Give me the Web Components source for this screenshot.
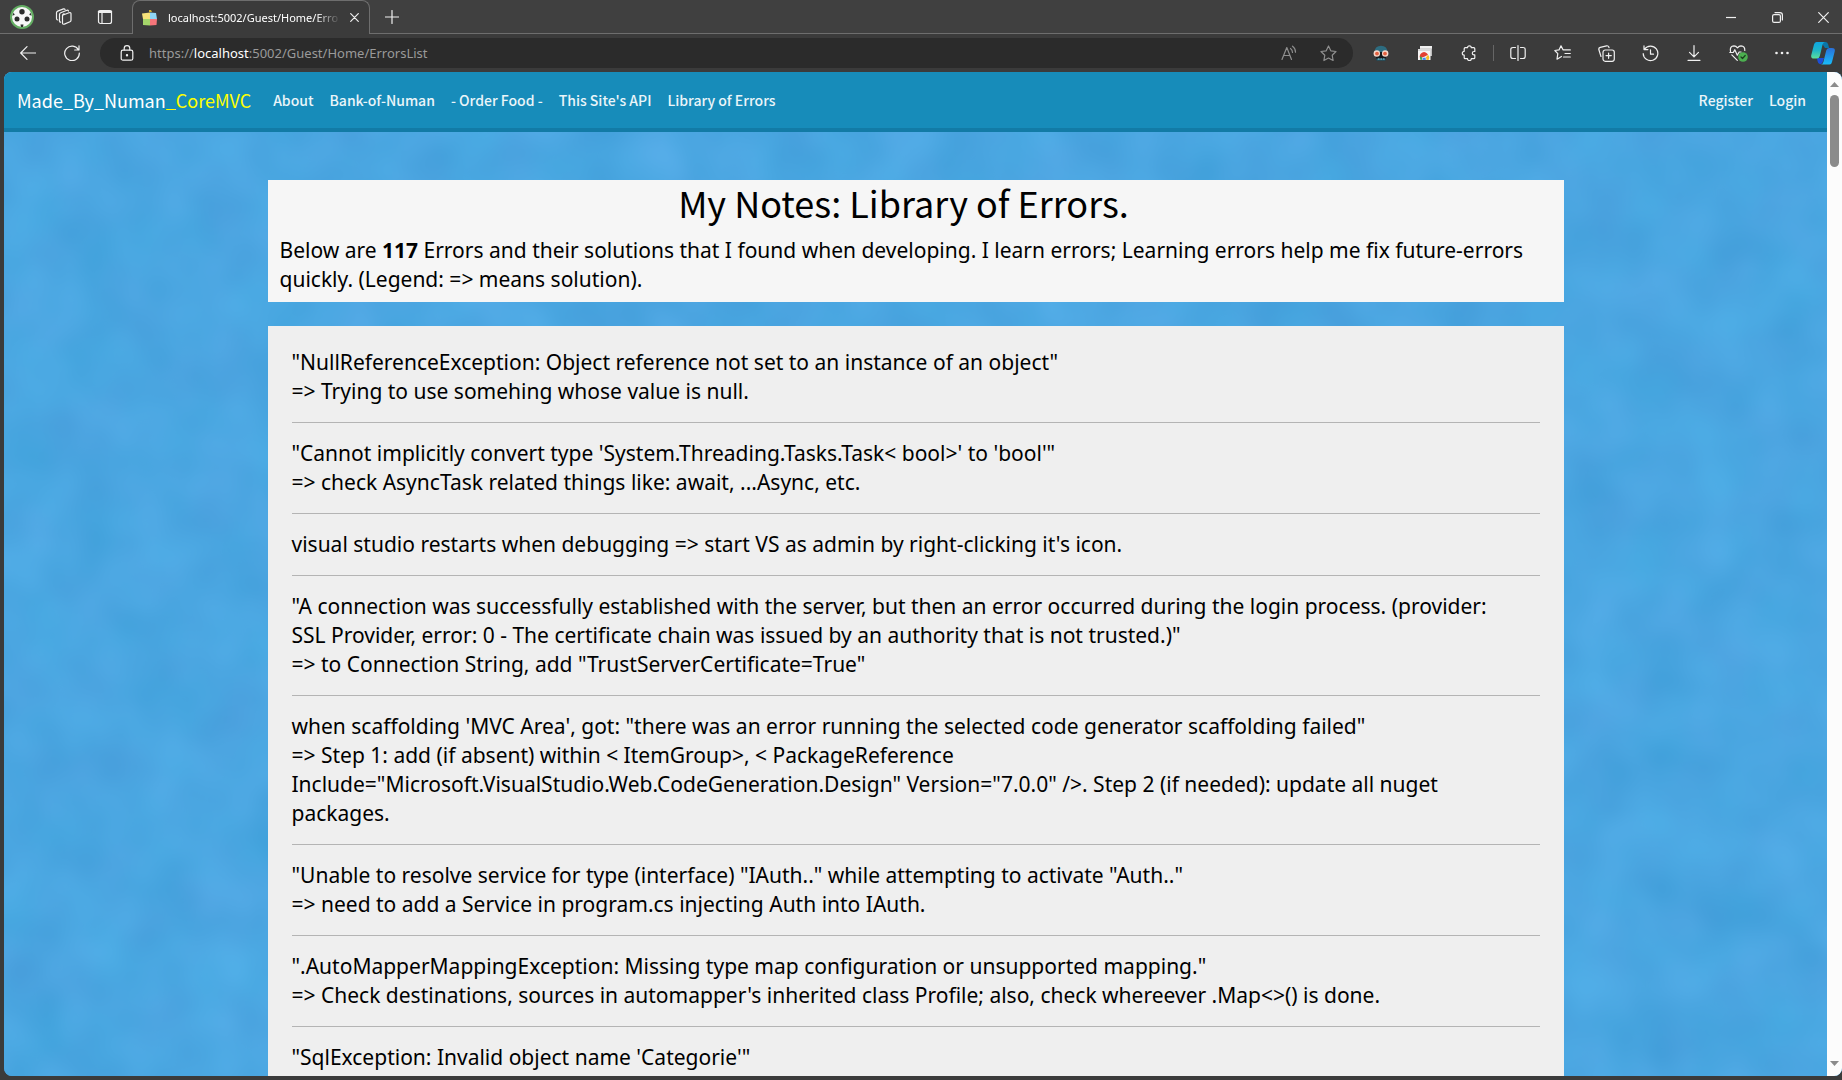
<!DOCTYPE html>
<html lang="en">
<head>
<meta charset="utf-8">
<title>localhost:5002/Guest/Home/ErrorsList</title>
<style>
  html, body { height: 100%; }
  body { margin: 0; background: #3b3b3b; overflow: hidden; font-family: "Noto Sans", sans-serif; }
</style>
</head>
<body>
<browser-window>
  <tab-strip slot="tabs"></tab-strip>
  <tool-bar slot="tools"></tool-bar>
  <site-nav slot="page"></site-nav>
  <notes-intro slot="page" heading="My Notes: Library of Errors.">Below are <b>117</b> Errors and their solutions that I found when developing. I learn errors; Learning errors help me fix future-errors quickly. (Legend: =&gt; means solution).</notes-intro>
  <error-list slot="page">
    <error-item>"NullReferenceException: Object reference not set to an instance of an object"<br>=&gt; Trying to use somehing whose value is null.</error-item>
    <error-item>"Cannot implicitly convert type 'System.Threading.Tasks.Task&lt; bool&gt;' to 'bool'"<br>=&gt; check AsyncTask related things like: await, ...Async, etc.</error-item>
    <error-item>visual studio restarts when debugging =&gt; start VS as admin by right-clicking it's icon.</error-item>
    <error-item>"A connection was successfully established with the server, but then an error occurred during the login process. (provider: SSL&nbsp;Provider, error: 0 - The certificate chain was issued by an authority that is not trusted.)"<br>=&gt; to Connection String, add "TrustServerCertificate=True"</error-item>
    <error-item>when scaffolding 'MVC Area', got: "there was an error running the selected code generator scaffolding failed"<br>=&gt; Step 1: add (if absent) within &lt; ItemGroup&gt;, &lt; PackageReference Include="Microsoft.VisualStudio.Web.CodeGeneration.Design" Version="7.0.0" /&gt;. Step 2 (if needed): update all nuget packages.</error-item>
    <error-item>"Unable to resolve service for type (interface) "IAuth.." while attempting to activate "Auth.."<br>=&gt; need to add a Service in program.cs injecting Auth into IAuth.</error-item>
    <error-item>".AutoMapperMappingException: Missing type map configuration or unsupported mapping."<br>=&gt; Check destinations, sources in automapper's inherited class Profile; also, check whereever .Map&lt;&gt;() is done.</error-item>
    <error-item>"SqlException: Invalid object name 'Categorie'"</error-item>
  </error-list>
</browser-window>

<script>
const define = (name, html) => customElements.define(name, class extends HTMLElement {
  connectedCallback() {
    if (this.shadowRoot) return;
    this.attachShadow({ mode: 'open' }).innerHTML =
      html.replace(/\{(\w+)\}/g, (m, k) => this.getAttribute(k) ?? '');
  }
});

define('browser-window', `
<style>
  :host { display: flex; flex-direction: column; height: 100vh; background: #3b3b3b; }
  .view { flex: 1; min-height: 0; margin: 0 0 4px 4px; display: flex; border-radius: 8px; overflow: hidden; position: relative; background: #48a5e1; }
  .water { position: absolute; inset: 0; width: 100%; height: 100%; }
  main { flex: 1; min-width: 0; overflow: hidden; position: relative; }
</style>
<slot name="tabs"></slot>
<slot name="tools"></slot>
<div class="view">
  <svg class="water" aria-hidden="true">
    <filter id="w" x="0" y="0" width="100%" height="100%" color-interpolation-filters="sRGB">
      <feTurbulence type="fractalNoise" baseFrequency="0.016 0.015" numOctaves="2" seed="7"/>
      <feColorMatrix values="0.07 0.06 0 0 0.227  0.075 0 0 0 0.614  0.065 0.02 0 0 0.840  0 0 0 0 1"/>
    </filter>
    <rect width="100%" height="100%" filter="url(#w)"/>
  </svg>
  <main><slot name="page"></slot></main>
  <scroll-rail></scroll-rail>
</div>`);

define('scroll-rail', `
<style>
  :host { display: flex; flex-direction: column; align-items: center; width: 15px; background: #fcfcfc; position: relative; padding: 10px 0; box-sizing: border-box; }
  i { width: 9px; height: 72px; border-radius: 5px; background: #8b8b8b; margin: 8px 0 auto; }
  svg { width: 9px; height: 5px; fill: #8b8b8b; }
</style>
<svg viewBox="0 0 9 5"><path d="M0 5 4.500 0 9 5z"/></svg><i></i><svg viewBox="0 0 9 5"><path d="M0 0H9L4.500 5z"/></svg>`);

define('tab-strip', `
<style>
  :host { display: flex; height: 34px; background: #404040; box-shadow: inset 0 -1px #6e6e6e; color: #fff; }
  button { all: unset; display: flex; align-items: center; justify-content: center; width: 44px; height: 34px; }
  svg { display: block; fill: none; stroke: #f0f0f0; stroke-width: 1.200; stroke-linecap: round; stroke-linejoin: round; }
  .tab { display: flex; align-items: center; width: 238px; box-sizing: border-box; border: 1px solid #6e6e6e; border-bottom: 0; border-radius: 8px 8px 0 0; background: #3b3b3b; padding: 0 6px 0 9px; margin: 0 0 0 7px; }
  .tab span { flex: 1; min-width: 0; margin: 0 4px 0 10px; white-space: nowrap; font: 11px/16px "Noto Sans", sans-serif; -webkit-mask-image: linear-gradient(90deg, #000 85%, transparent); mask-image: linear-gradient(90deg, #000 85%, transparent); }
  .tab button { width: 18px; height: 18px; }
  .ctl { display: flex; margin: 0 -4px 0 auto; }
  .ctl button { width: 46px; }
  .me { width: 43px; }
  .wide { width: 41px; }
</style>
<button class="me" aria-label="Profile"><svg width="24" height="24" viewBox="0 0 24 24" stroke="none"><circle cx="12" cy="12" r="12" fill="#63ad62" stroke="none"/><circle cx="12" cy="12" r="10" fill="#f7f7f7" stroke="none"/><g fill="#2c2c2c" stroke="none"><circle cx="12" cy="6.800" r="2.700"/><circle cx="7" cy="14" r="2.500"/><circle cx="17" cy="14" r="2.500"/><path d="M10.500 19.500h3l-.5 2.400h-2zM2.400 10.500l1.300-3 1 2.600zM21.600 10.500l-1.300-3-1 2.600z"/></g></svg></button>
<button class="wide" aria-label="Workspaces"><svg width="18" height="18" viewBox="0 0 18 18"><path d="M7.500 7.200 14 4.800q2-.6 2 1v6.500q0 1-1 1.400l-5.600 2.400q-1.900.6-1.900-1.200zM7.500 7.200q.3-1 1.500-1.500M5.600 14.200q-1.100 0-1.100-1.400V6.500q0-1.300 1.200-1.800L12 2.300q1-.3 1.500.7M2.800 12q-1.300 0-1.300-1.400V4.800q0-1.200 1.200-1.700L8.500.9q1-.3 1.500.5"/></svg></button>
<button class="wide" aria-label="Tab actions"><svg width="16" height="16" viewBox="0 0 16 16"><rect x="1.500" y="1.500" width="13" height="13" rx="2"/><path d="M1.500 3.500h13M5 4v10" /><path d="M2 2.800h12" stroke-width="2.400"/></svg></button>
<div class="tab">
  <svg width="16" height="16" viewBox="0 0 16 16" stroke="none"><g stroke="none"><path d="M0 3.500 8 2.500V9H1z" fill="#f7e27a"/><path d="M8 2.500 14 3l1 6H8z" fill="#8fd6f5"/><path d="M1 9h7v6.500L1 15z" fill="#a5d66a"/><path d="M8 9h7l-.5 6L8 15.500z" fill="#f5757a"/><path d="M7 0h2l1 2H7z" fill="#d0b030"/></g></svg>
  <span>localhost:5002/Guest/Home/Erro</span>
  <button aria-label="Close tab"><svg width="9" height="9" viewBox="0 0 9 9"><path d="M.7.7l7.600 7.600M8.300.7.7 8.300"/></svg></button>
</div>
<button aria-label="New tab"><svg width="14" height="14" viewBox="0 0 14 14"><path d="M7 .5v13M.5 7h13"/></svg></button>
<div class="ctl">
  <button aria-label="Minimize"><svg width="10" height="10" viewBox="0 0 10 10"><path d="M0 5.500h10" stroke-linecap="butt"/></svg></button>
  <button aria-label="Restore"><svg width="11" height="11" viewBox="0 0 11 11"><rect x=".6" y="2.600" width="7.800" height="7.800" rx="1.500"/><path d="M3 .6h5q2.400 0 2.400 2.400v5"/></svg></button>
  <button aria-label="Close"><svg width="11" height="11" viewBox="0 0 11 11"><path d="M.7.7l9.600 9.600M10.300.7.7 10.300"/></svg></button>
</div>`);

define('tool-bar', `
<style>
  :host { display: flex; align-items: center; height: 38px; padding-left: 6px; background: #3b3b3b; }
  button { all: unset; display: flex; align-items: center; justify-content: center; width: 44px; height: 34px; }
  svg { display: block; fill: none; stroke: #f0f0f0; stroke-width: 1.200; stroke-linecap: round; stroke-linejoin: round; }
  .url { flex: 1; height: 30px; margin: 0 6px; border-radius: 15px; background: #2b2b2b; display: flex; align-items: center; padding-left: 4px; }
  .url p { flex: 1; margin: 0; font: 13px/20px "Noto Sans", sans-serif; color: #9a9a9a; }
  .url p b { font-weight: 400; color: #fff; }
  .url svg { stroke: #8e8e8e; }
  .url .lock svg { stroke: #f0f0f0; }
  .url button { width: 28px; }
  .url .lock { width: 45px; }
  .url .star { width: 50px; }
  hr { width: 1px; height: 16px; margin: 0 2px; border: 0; background: #666; }
  .co { width: 38px; }
</style>
<button aria-label="Back"><svg width="16" height="14" viewBox="0 0 16 14"><path d="M7 .7.7 7 7 13.300M.7 7h14.800"/></svg></button>
<button aria-label="Refresh"><svg width="16" height="16" viewBox="0 0 16 16"><path d="M14.500 5A7.300 7.300 0 1 0 15.300 8M15 .8V5h-4.300"/></svg></button>
<div class="url">
  <button class="lock" aria-label="Site information"><svg width="14" height="16" viewBox="0 0 14 16"><rect x="1.200" y="5.200" width="11.600" height="10" rx="1.800"/><path d="M4.200 5V3.500a2.800 2.800 0 0 1 5.600 0V5"/><circle cx="7" cy="10.200" r=".6" fill="#f0f0f0"/></svg></button>
  <p>https://<b>localhost</b>:5002/Guest/Home/ErrorsList</p>
  <button aria-label="Read aloud"><svg width="16" height="16" viewBox="0 0 16 16"><path d="M1 14.500 5.800 2.500l4.700 12M2.700 10.500h6.200M9.500 3.500q2 1.500 2 4M11.500 1.200q3 2 3 6"/></svg></button>
  <button class="star" aria-label="Add to favorites"><svg width="17" height="17" viewBox="0 0 17 17"><path d="M8.500 1l2.300 4.800 5.200.7-3.800 3.700.9 5.300-4.600-2.500-4.600 2.500.9-5.300L1 6.500l5.200-.7z"/></svg></button>
</div>
<button aria-label="Extension"><svg width="16" height="16" viewBox="0 0 16 16"><g stroke="none"><path d="M1.500 7Q2 .8 8 .8T14.500 7z" fill="#2d6c80"/><path d="M3 7h10v5l-.5 3.500h-9L3 12z" fill="#14191c"/><circle cx="3.800" cy="8.500" r="3.200" fill="#f6d9cc"/><circle cx="12.200" cy="8.500" r="3.200" fill="#f6d9cc"/><circle cx="4" cy="8.600" r="1.900" fill="#e2603f"/><circle cx="12" cy="8.600" r="1.900" fill="#e2603f"/><path d="M3.500 13.500h9v2h-9z" fill="#2d6c80"/><path d="M5 13.500h1.500v1H5zM7.500 13.500h1.500v1H7.500zM10 13.500h1.500v1H10z" fill="#7cc6d6"/></g></svg></button>
<button aria-label="Extension"><svg width="16" height="14" viewBox="0 0 16 14"><g stroke="none"><rect x="3" width="12" height="10" fill="#bdbdbd"/><rect x="3" width="12" height="2.500" fill="#f0f0f0"/><rect x="1" y="3" width="12.500" height="11" fill="#f6f6f6"/><rect x="1" y="3" width="12.500" height="2" fill="#dadada"/><path d="M3 12a4.300 4.300 0 0 1 8-3.200L7 11z" fill="#e34133"/><path d="M11 8.800a4.500 4.500 0 0 1 .6 5.200H7z" fill="#f6c026"/><path d="M3.500 14q-1-2 0-4L7 14z" fill="#33a852"/><path d="M5.200 14a2.100 2.100 0 1 1 4 0z" fill="#4285f4" stroke="#fff" stroke-width=".6"/></g></svg></button>
<button aria-label="Extensions"><svg width="16" height="16" viewBox="0 0 16 16"><path d="M4.200 2.700h2.300a1.900 1.900 0 0 1 3.800 0h2.500q1 0 1 1v2.800h-.8a1.700 1.700 0 0 0 0 3.400h.8v2.800q0 1-1 1h-2.500a1.900 1.900 0 0 1-3.800 0H4.200q-1 0-1-1V10.100a1.900 1.900 0 0 1 0-3.800V3.700q0-1 1-1z"/></svg></button>
<hr>
<button aria-label="Split screen"><svg width="16" height="16" viewBox="0 0 16 16"><path d="M5.500 2.500H3q-2.200 0-2.200 2v7q0 2 2.200 2h2.500M10.500 2.500H13q2.200 0 2.200 2v7q0 2-2.200 2h-2.500M8 .6v14.800"/></svg></button>
<button aria-label="Favorites"><svg width="17" height="16" viewBox="0 0 17 16"><path d="M10.500 5 9 4.800 7 .8 5 4.900.8 5.500l3 3.100-.8 5.600L7.500 11.500M9.500 4.900h6.800M11 8.500h5.300M9.500 12h6.800"/></svg></button>
<button aria-label="Collections"><svg width="17" height="17" viewBox="0 0 17 17"><rect x="5" y="5" width="11.300" height="11.300" rx="2.200"/><path d="M10.600 8v5.300M8 10.600h5.300M3 11.500 .9 4.800q-.5-1.900 1.300-2.400L8.600.8q1.600-.3 2.200 1.200l.2.700"/></svg></button>
<button aria-label="History"><svg width="17" height="17" viewBox="0 0 17 17"><path d="M2.500 4.200A7.300 7.300 0 1 1 1.200 8.500M2 .9v3.700h3.900M8.500 4.800v4.400h3"/></svg></button>
<button aria-label="Downloads"><svg width="14" height="16" viewBox="0 0 14 16"><path d="M7 .6v11M2.500 7.300 7 11.800l4.500-4.500M1 15.300h12"/></svg></button>
<button aria-label="Browser essentials"><svg width="19" height="17" viewBox="0 0 19 17"><path d="M1.500 6.500Q.5 1 5 .8q2 0 3.500 2Q10 .8 12 .8q4 .2 3.800 4.700M.8 7.500h3.500l1.500-2.800 2.500 5.500 1.800-3.200h2M2.800 9.800l5.500 5.500"/><circle cx="14" cy="12" r="4.800" fill="#4caf50" stroke="none"/><path d="M12 12l1.500 1.500 2.700-3" stroke="#1c3d1e"/></svg></button>
<button aria-label="Settings and more"><svg width="14" height="4" viewBox="0 0 14 4"><g fill="#f0f0f0" stroke="none"><circle cx="1.500" cy="2" r="1.300"/><circle cx="7" cy="2" r="1.300"/><circle cx="12.500" cy="2" r="1.300"/></g></svg></button>
<button class="co" aria-label="Copilot"><svg width="24" height="23" viewBox="0 0 24 23"><defs><linearGradient id="a" x1="0" y1="0" x2="0" y2="1"><stop offset="0" stop-color="#0ea5e0"/><stop offset="0.500" stop-color="#1fb5c8"/><stop offset="1" stop-color="#5ce09a"/></linearGradient><linearGradient id="b" x1="0" y1="0" x2="0" y2="1"><stop offset="0" stop-color="#2a6fd8"/><stop offset="1" stop-color="#18bdfb"/></linearGradient></defs><g stroke="none"><path d="M6 16h7l-1.500 4.500Q10.500 22.500 9 22.300 7 22 6.500 19z" fill="#1c4fd8"/><path d="M10 0h4.500q2 0 2.600 2.200L18.200 6H14z" fill="#0a76a8"/><path d="M5.500 0H14q-1.800.3-2.400 2.500L8.800 14q-.6 2.500-3 2.500H3Q-.5 16.500.3 13L3 2.500Q3.600 0 5.500 0z" fill="url(#a)"/><path d="M18.500 22.500H10q1.800-.3 2.400-2.500L15.200 8.500q.6-2.500 3-2.500H21q3.500 0 2.700 3.500L21 20q-.6 2.500-2.500 2.500z" fill="url(#b)"/></g></svg></button>`);

define('site-nav', `
<style>
  :host { display: block; background: #178cba; border-bottom: 4px solid #127ba6; }
  nav { display: flex; align-items: center; height: 56px; padding: 0 21px 0 13px; gap: 16px; font: 500 14px/20px "Noto Sans CJK SC", "Noto Sans", sans-serif; }
  a { color: #eaf5f9; text-decoration: none; white-space: nowrap; }
  .brand { font-size: 18px; font-weight: 400; line-height: 28px; color: #fff; margin-right: 6px; }
  .brand span { color: #ff0; }
  .push { margin-left: auto; }
</style>
<nav>
  <a class="brand" href="#">Made_By_Numan<span>_CoreMVC</span></a>
  <a href="#">About</a><a href="#">Bank-of-Numan</a><a href="#">- Order Food -</a><a href="#">This Site's API</a><a href="#">Library of Errors</a>
  <a class="push" href="#">Register</a><a href="#">Login</a>
</nav>`);

define('notes-intro', `
<style>
  :host { display: block; box-sizing: border-box; max-width: 1296px; margin: 48px auto 24px; padding: 0 12px 8px; background: #f6f6f6; color: #000; font: 21px/29px "Noto Sans", sans-serif; }
  h1 { margin: 0 24px 12px 0; text-align: center; font: 400 36px/44px "Noto Sans CJK SC", "Noto Sans", sans-serif; }
  p { margin: 0; }
</style>
<h1>{heading}</h1>
<p><slot></slot></p>`);

define('error-list', `
<style>
  :host { display: block; box-sizing: border-box; max-width: 1296px; margin: 0 auto; padding: 22px 24px 64px; background: #efefef; color: #000; font: 21px/29px "Noto Sans", sans-serif; }
</style>
<slot></slot>`);

define('error-item', `
<style>
  :host { display: block; border-bottom: 1px solid #b4b4b4; padding-bottom: 16px; margin-bottom: 16px; }
</style>
<slot></slot>`);
</script>
</body>
</html>
